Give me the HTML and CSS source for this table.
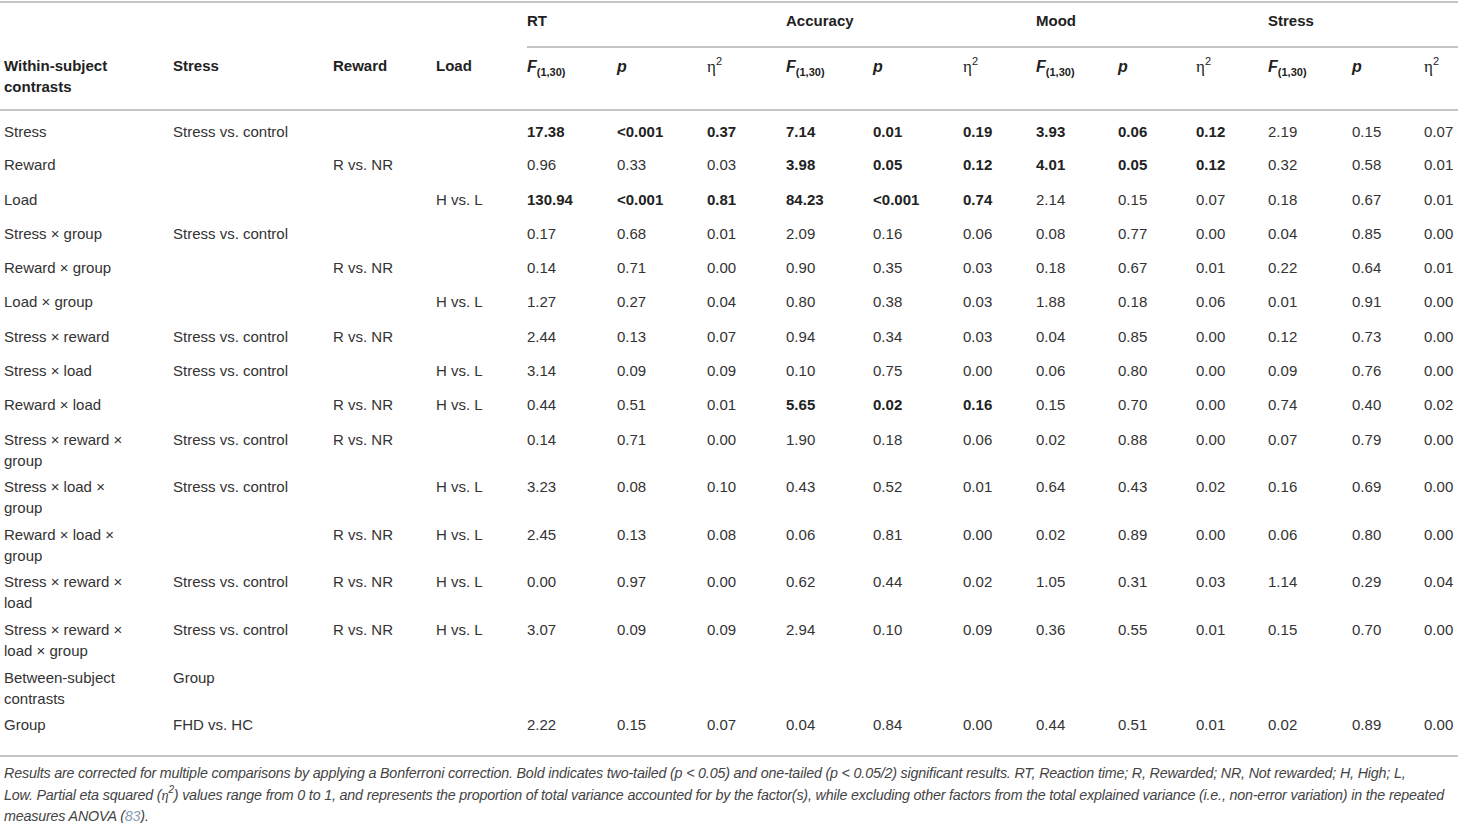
FILE: index.html
```html
<!DOCTYPE html>
<html lang="en">
<head>
    <meta charset="UTF-8">
    <meta name="viewport" content="width=device-width, initial-scale=1.0">
    <title>Table - Stress, reward and load contrasts</title>
    <link rel="stylesheet" href="styles.css">
</head>
<body>
    <table class="results">
        <colgroup>
            <col class="c-contrast">
            <col class="c-stress">
            <col class="c-reward">
            <col class="c-load">
            <col class="c-f1"><col class="c-p1"><col class="c-e1">
            <col class="c-f2"><col class="c-p2"><col class="c-e2">
            <col class="c-f3"><col class="c-p3"><col class="c-e3">
            <col class="c-f4"><col class="c-p4"><col class="c-e4">
        </colgroup>
        <thead>
            <tr class="group-row">
                <th class="blank"></th>
                <th class="blank"></th>
                <th class="blank"></th>
                <th class="blank"></th>
                <th colspan="3" class="group">RT</th>
                <th colspan="3" class="group">Accuracy</th>
                <th colspan="3" class="group">Mood</th>
                <th colspan="3" class="group">Stress</th>
            </tr>
            <tr class="label-row">
                <th class="first">Within-subject contrasts</th>
                <th>Stress</th>
                <th>Reward</th>
                <th>Load</th>
                <th><i>F</i><sub>(1,30)</sub></th><th><i>p</i></th><th class="eta"><span class="greek">η</span><sup>2</sup></th>
                <th><i>F</i><sub>(1,30)</sub></th><th><i>p</i></th><th class="eta"><span class="greek">η</span><sup>2</sup></th>
                <th><i>F</i><sub>(1,30)</sub></th><th><i>p</i></th><th class="eta"><span class="greek">η</span><sup>2</sup></th>
                <th><i>F</i><sub>(1,30)</sub></th><th><i>p</i></th><th class="eta"><span class="greek">η</span><sup>2</sup></th>
            </tr>
        </thead>
        <tbody>
            <tr class="top-row">
                <td class="first">Stress</td><td>Stress vs. control</td><td></td><td></td>
                <td><b>17.38</b></td><td><b>&lt;0.001</b></td><td><b>0.37</b></td>
                <td><b>7.14</b></td><td><b>0.01</b></td><td><b>0.19</b></td>
                <td><b>3.93</b></td><td><b>0.06</b></td><td><b>0.12</b></td>
                <td>2.19</td><td>0.15</td><td>0.07</td>
            </tr>
            <tr>
                <td class="first">Reward</td><td></td><td>R vs. NR</td><td></td>
                <td>0.96</td><td>0.33</td><td>0.03</td>
                <td><b>3.98</b></td><td><b>0.05</b></td><td><b>0.12</b></td>
                <td><b>4.01</b></td><td><b>0.05</b></td><td><b>0.12</b></td>
                <td>0.32</td><td>0.58</td><td>0.01</td>
            </tr>
            <tr>
                <td class="first">Load</td><td></td><td></td><td>H vs. L</td>
                <td><b>130.94</b></td><td><b>&lt;0.001</b></td><td><b>0.81</b></td>
                <td><b>84.23</b></td><td><b>&lt;0.001</b></td><td><b>0.74</b></td>
                <td>2.14</td><td>0.15</td><td>0.07</td>
                <td>0.18</td><td>0.67</td><td>0.01</td>
            </tr>
            <tr>
                <td class="first">Stress × group</td><td>Stress vs. control</td><td></td><td></td>
                <td>0.17</td><td>0.68</td><td>0.01</td>
                <td>2.09</td><td>0.16</td><td>0.06</td>
                <td>0.08</td><td>0.77</td><td>0.00</td>
                <td>0.04</td><td>0.85</td><td>0.00</td>
            </tr>
            <tr>
                <td class="first">Reward × group</td><td></td><td>R vs. NR</td><td></td>
                <td>0.14</td><td>0.71</td><td>0.00</td>
                <td>0.90</td><td>0.35</td><td>0.03</td>
                <td>0.18</td><td>0.67</td><td>0.01</td>
                <td>0.22</td><td>0.64</td><td>0.01</td>
            </tr>
            <tr>
                <td class="first">Load × group</td><td></td><td></td><td>H vs. L</td>
                <td>1.27</td><td>0.27</td><td>0.04</td>
                <td>0.80</td><td>0.38</td><td>0.03</td>
                <td>1.88</td><td>0.18</td><td>0.06</td>
                <td>0.01</td><td>0.91</td><td>0.00</td>
            </tr>
            <tr>
                <td class="first">Stress × reward</td><td>Stress vs. control</td><td>R vs. NR</td><td></td>
                <td>2.44</td><td>0.13</td><td>0.07</td>
                <td>0.94</td><td>0.34</td><td>0.03</td>
                <td>0.04</td><td>0.85</td><td>0.00</td>
                <td>0.12</td><td>0.73</td><td>0.00</td>
            </tr>
            <tr>
                <td class="first">Stress × load</td><td>Stress vs. control</td><td></td><td>H vs. L</td>
                <td>3.14</td><td>0.09</td><td>0.09</td>
                <td>0.10</td><td>0.75</td><td>0.00</td>
                <td>0.06</td><td>0.80</td><td>0.00</td>
                <td>0.09</td><td>0.76</td><td>0.00</td>
            </tr>
            <tr>
                <td class="first">Reward × load</td><td></td><td>R vs. NR</td><td>H vs. L</td>
                <td>0.44</td><td>0.51</td><td>0.01</td>
                <td><b>5.65</b></td><td><b>0.02</b></td><td><b>0.16</b></td>
                <td>0.15</td><td>0.70</td><td>0.00</td>
                <td>0.74</td><td>0.40</td><td>0.02</td>
            </tr>
            <tr>
                <td class="first">Stress × reward × group</td><td>Stress vs. control</td><td>R vs. NR</td><td></td>
                <td>0.14</td><td>0.71</td><td>0.00</td>
                <td>1.90</td><td>0.18</td><td>0.06</td>
                <td>0.02</td><td>0.88</td><td>0.00</td>
                <td>0.07</td><td>0.79</td><td>0.00</td>
            </tr>
            <tr>
                <td class="first">Stress × load × group</td><td>Stress vs. control</td><td></td><td>H vs. L</td>
                <td>3.23</td><td>0.08</td><td>0.10</td>
                <td>0.43</td><td>0.52</td><td>0.01</td>
                <td>0.64</td><td>0.43</td><td>0.02</td>
                <td>0.16</td><td>0.69</td><td>0.00</td>
            </tr>
            <tr>
                <td class="first">Reward × load × group</td><td></td><td>R vs. NR</td><td>H vs. L</td>
                <td>2.45</td><td>0.13</td><td>0.08</td>
                <td>0.06</td><td>0.81</td><td>0.00</td>
                <td>0.02</td><td>0.89</td><td>0.00</td>
                <td>0.06</td><td>0.80</td><td>0.00</td>
            </tr>
            <tr>
                <td class="first">Stress × reward × load</td><td>Stress vs. control</td><td>R vs. NR</td><td>H vs. L</td>
                <td>0.00</td><td>0.97</td><td>0.00</td>
                <td>0.62</td><td>0.44</td><td>0.02</td>
                <td>1.05</td><td>0.31</td><td>0.03</td>
                <td>1.14</td><td>0.29</td><td>0.04</td>
            </tr>
            <tr>
                <td class="first">Stress × reward × load × group</td><td>Stress vs. control</td><td>R vs. NR</td><td>H vs. L</td>
                <td>3.07</td><td>0.09</td><td>0.09</td>
                <td>2.94</td><td>0.10</td><td>0.09</td>
                <td>0.36</td><td>0.55</td><td>0.01</td>
                <td>0.15</td><td>0.70</td><td>0.00</td>
            </tr>
            <tr>
                <td class="first">Between-subject contrasts</td><td>Group</td><td></td><td></td>
                <td></td><td></td><td></td>
                <td></td><td></td><td></td>
                <td></td><td></td><td></td>
                <td></td><td></td><td></td>
            </tr>
            <tr class="last-row">
                <td class="first">Group</td><td>FHD vs. HC</td><td></td><td></td>
                <td>2.22</td><td>0.15</td><td>0.07</td>
                <td>0.04</td><td>0.84</td><td>0.00</td>
                <td>0.44</td><td>0.51</td><td>0.01</td>
                <td>0.02</td><td>0.89</td><td>0.00</td>
            </tr>
        </tbody>
    </table>

    <p class="note">Results are corrected for multiple comparisons by applying a Bonferroni correction. Bold indicates two-tailed (p &lt; 0.05) and one-tailed (p &lt; 0.05/2) significant results. RT, Reaction time; R, Rewarded; NR, Not rewarded; H, High; L,<br>Low. Partial eta squared (<span class="greek">η</span><sup>2</sup>) values range from 0 to 1, and represents the proportion of total variance accounted for by the factor(s), while excluding other factors from the total explained variance (i.e., non-error variation) in the repeated measures ANOVA (<span class="ref">83</span>).</p>
</body>
</html>
```

FILE: styles.css
```css
body {
    margin: 0;
    font-family: "Liberation Sans", Arial, sans-serif;
    color: #333;
    background: #fff;
}
.results {
    width: 1458px;
    table-layout: fixed;
    border-collapse: collapse;
    margin-top: 1px;
    border-top: 2px solid #c4c4c4;
    border-bottom: 2px solid #c4c4c4;
    font-size: 15px;
    line-height: 21px;
}
.c-contrast { width: 173px; }
.c-stress { width: 160px; }
.c-reward { width: 103px; }
.c-load { width: 91px; }
.c-f1 { width: 90px; }
.c-p1 { width: 90px; }
.c-e1 { width: 79px; }
.c-f2 { width: 87px; }
.c-p2 { width: 90px; }
.c-e2 { width: 73px; }
.c-f3 { width: 82px; }
.c-p3 { width: 78px; }
.c-e3 { width: 72px; }
.c-f4 { width: 84px; }
.c-p4 { width: 72px; }
.c-e4 { width: 34px; }

th, td {
    padding: 0;
    text-align: left;
    vertical-align: top;
}
th {
    font-weight: bold;
    color: #222;
}
.group-row th {
    padding: 7px 0 15px;
}
.group-row .group {
    border-bottom: 2px solid #c4c4c4;
}
.label-row th {
    padding: 8px 0 12px;
    border-bottom: 2px solid #c4c4c4;
}
.first {
    padding-left: 4px !important;
    padding-right: 36px !important;
}
th sub {
    font-size: 11px;
    font-style: normal;
    vertical-align: -4px;
    line-height: 0;
}
th i {
    font-size: 16px;
}
.eta {
    font-weight: normal;
}
.eta .greek {
    font-size: 17px;
}
.eta sup {
    font-size: 11px;
}
.greek {
    font-family: "Liberation Serif", "Times New Roman", serif;
}
sup {
    font-size: 10px;
    line-height: 0;
    vertical-align: 7px;
}
tbody tr {
    height: 34.3px;
}
tbody td {
    padding: 3px 0 2.6px;
}
tbody .top-row td {
    padding-top: 10px;
}
tbody .top-row {
    height: 41.3px;
}
tbody .last-row td {
    padding-bottom: 14px;
}
tbody .last-row {
    height: 45px;
}
td b {
    color: #222;
}
.note {
    margin: 6px 0 0;
    padding: 0 0 0 4px;
    font-size: 14.3px;
    line-height: 21.5px;
    letter-spacing: -0.18px;
    font-style: italic;
    color: #444;
}
.ref {
    color: #8a9bb5;
}
```
